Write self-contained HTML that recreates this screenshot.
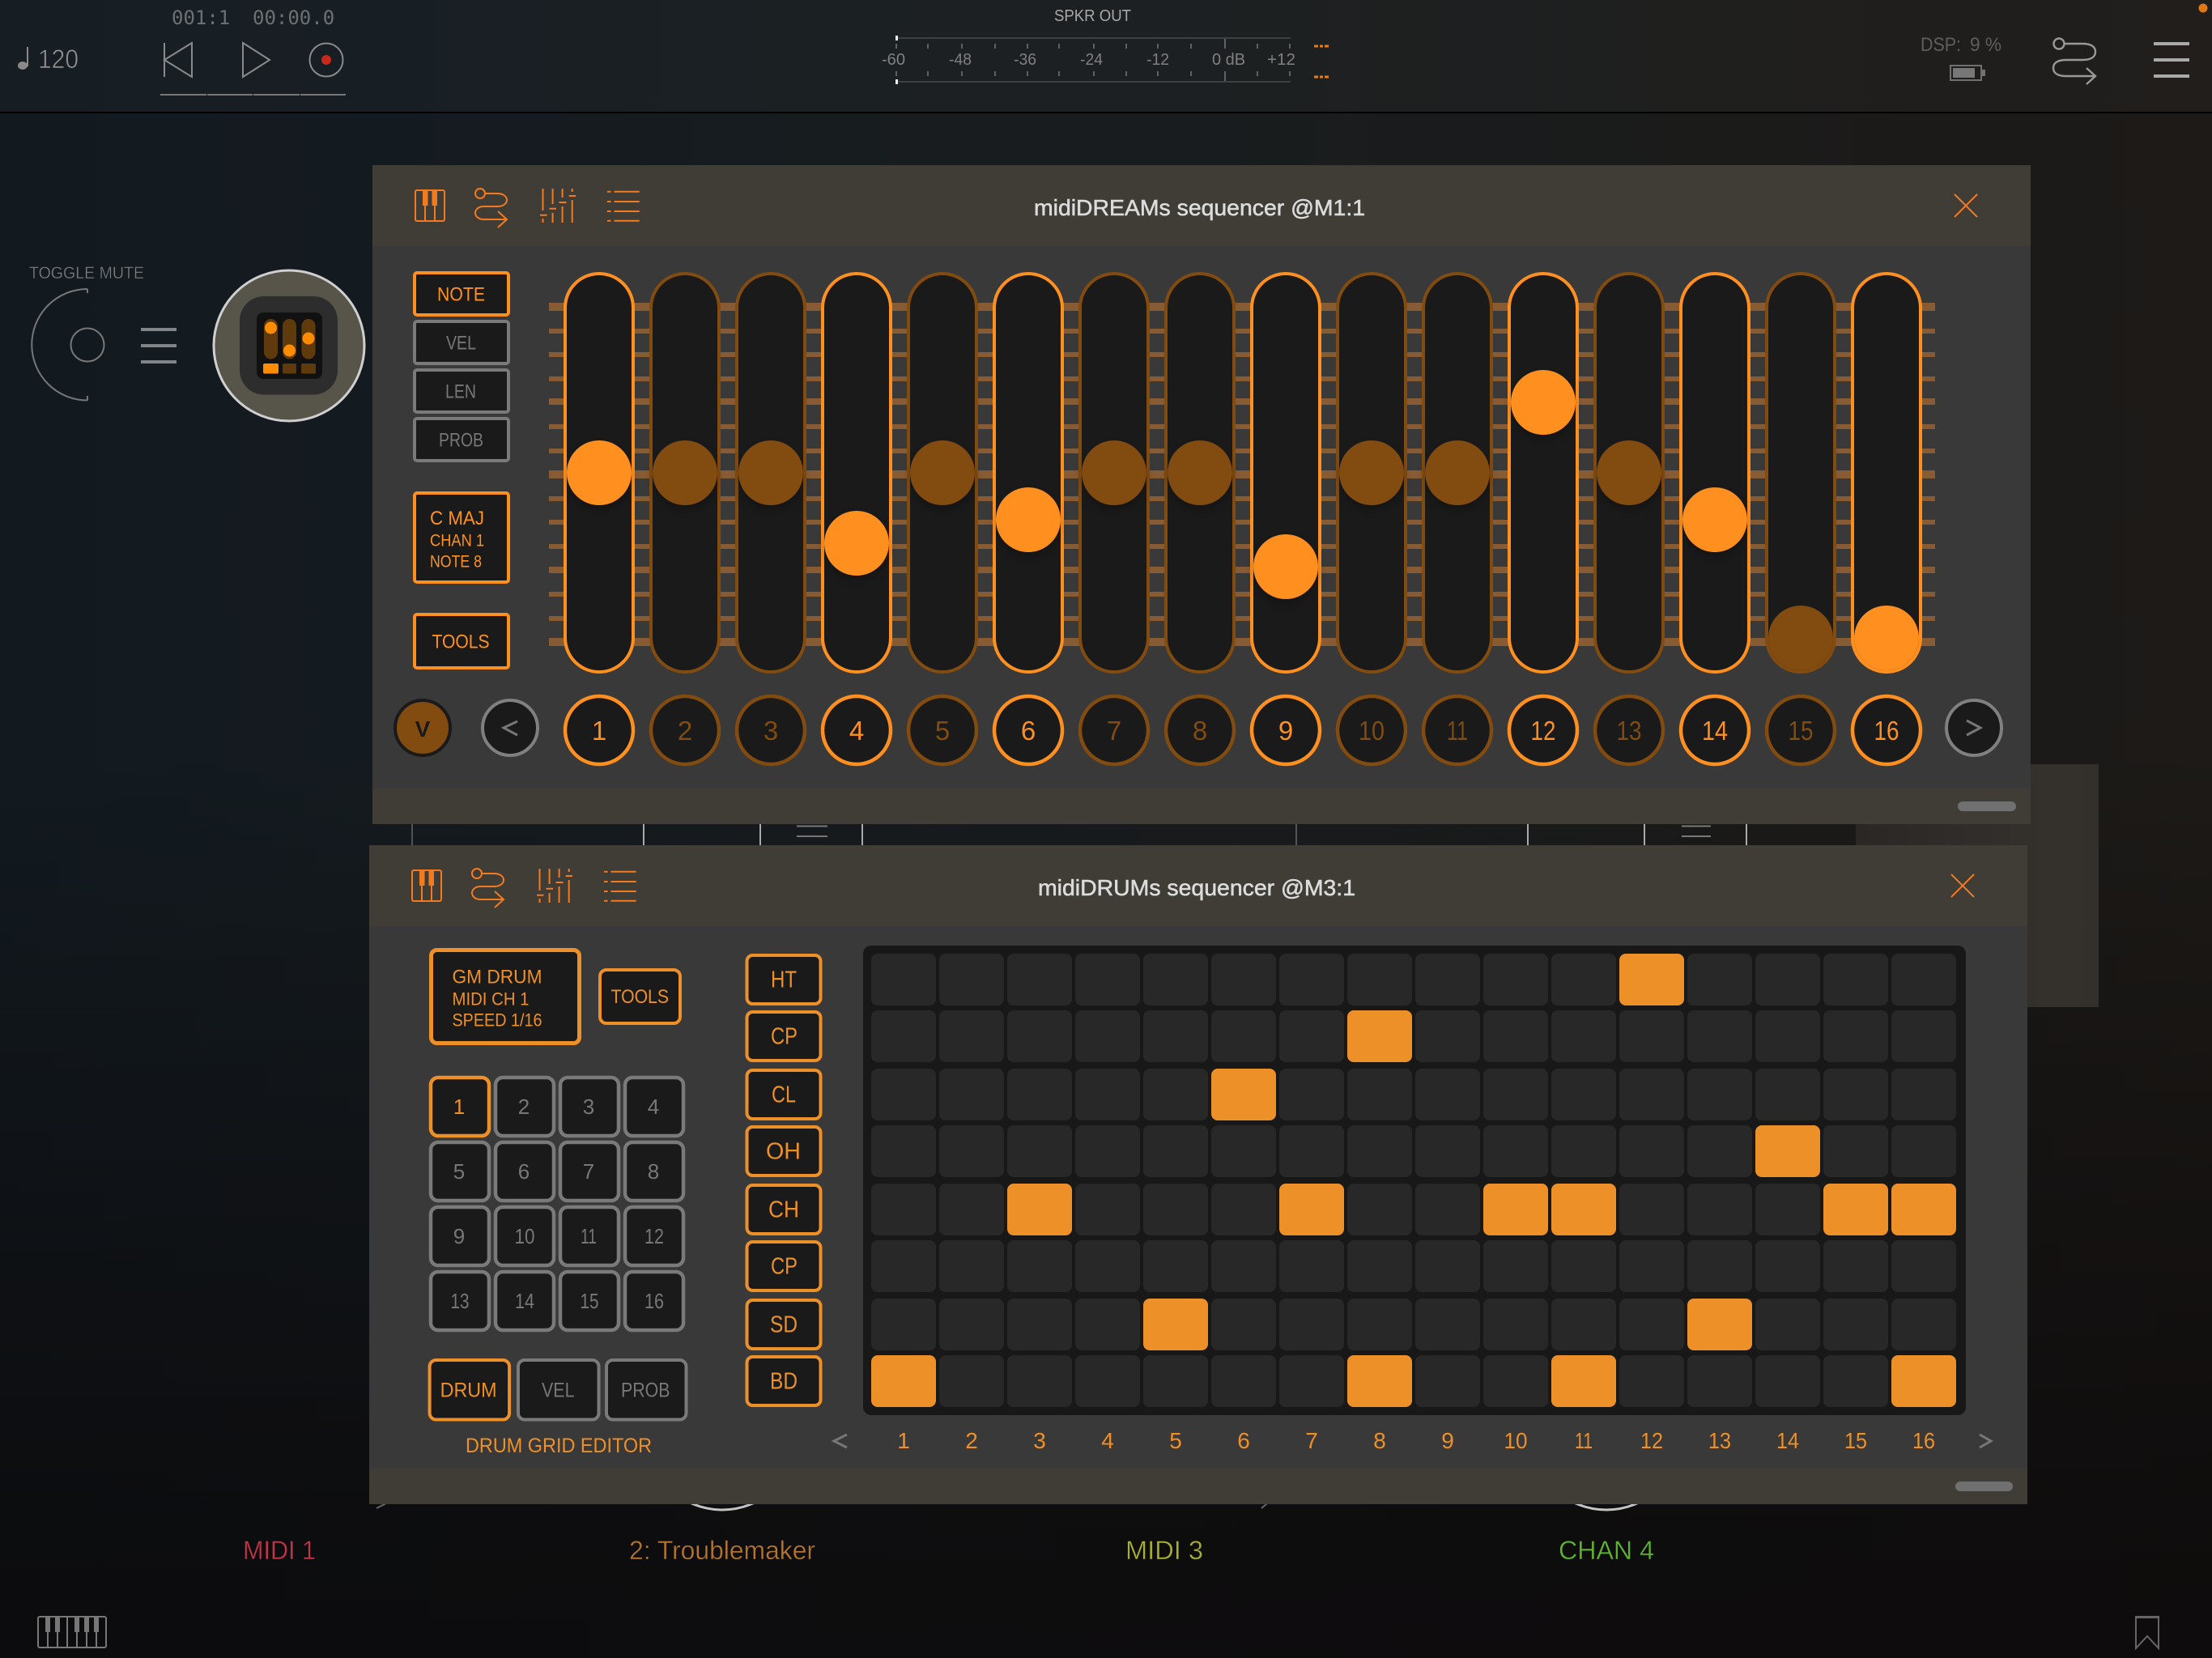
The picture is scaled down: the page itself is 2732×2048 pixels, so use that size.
<!DOCTYPE html>
<html><head><meta charset="utf-8"><title>midiDREAMs</title>
<style>
html,body{margin:0;padding:0;background:#111;width:2732px;height:2048px;overflow:hidden}
svg{display:block;font-family:"Liberation Sans",sans-serif}
.o{fill:#ff9020}.b{fill:#824b10}.g{fill:#777}.o2{fill:#ee9028}
.so{stroke:#ff9020}.sb{stroke:#824b10}.sg{stroke:#7a7a7a}.so2{stroke:#ee9028}
.s{fill:#1a1a1a;stroke-width:4}
.k{filter:drop-shadow(0 6px 5px rgba(0,0,0,.22))}
.t{font-size:24px}
.n{font-size:33px;text-anchor:middle}
.p{font-size:26px;text-anchor:middle;fill:#777}
.l{font-size:29px}
.c{font-size:28px;text-anchor:middle;fill:#ee9028}
.m{font-size:20px;fill:#808080}
.ic{fill:none;stroke:#f47a20;stroke-width:2}
</style></head><body>
<svg width="2732" height="2048" viewBox="0 0 2732 2048" xmlns="http://www.w3.org/2000/svg">
<defs>
<linearGradient id="bg1" x1="0" x2="1" y1="0" y2="0"><stop offset="0" stop-color="#121a20"/><stop offset=".45" stop-color="#181c1f"/><stop offset="1" stop-color="#1d1a17"/></linearGradient>
<linearGradient id="bg2" x1="0" x2="0" y1="0" y2="1"><stop offset="0" stop-color="#0a0808" stop-opacity="0"/><stop offset=".45" stop-color="#0a0808" stop-opacity="0"/><stop offset=".9" stop-color="#0a0809" stop-opacity=".72"/><stop offset="1" stop-color="#0a0809" stop-opacity=".78"/></linearGradient>
<linearGradient id="blk" x1="0" x2="1" y1="0" y2="0"><stop offset="0" stop-color="#2a2725"/><stop offset=".8" stop-color="#34312d"/><stop offset="1" stop-color="#33302c"/></linearGradient>
<g id="hdr">
<rect class="ic" x="509" y="1075" width="36" height="38" rx="2"/>
<rect x="518" y="1075" width="6.5" height="19" fill="#f47a20"/>
<rect x="529.5" y="1075" width="6.5" height="19" fill="#f47a20"/>
<path class="ic" d="M521 1094V1113M533 1094V1113"/>
<ellipse class="ic" cx="589" cy="1079" rx="6" ry="6"/>
<path class="ic" d="M595 1079H610C618 1079 622 1083 622 1087C622 1091 618 1095 610 1095H593C587 1095 583 1099 583 1103C583 1107 587 1111 593 1111H622M611 1101L622 1111L611 1121"/>
<path class="ic" d="M666.5 1073V1100M663 1105.7H671.5M666.5 1110V1115M678.6 1073V1092M674.5 1097.7H683M678.6 1103V1115M690.6 1073V1084M686.5 1090H695.5M690.6 1095V1115M702.7 1073V1077M698.7 1082H707M702.7 1087V1115"/>
<path class="ic" d="M746 1076.7H750.5M754.5 1076.7H785.7M746 1089H750.5M754.5 1089H785.7M746 1101H750.5M754.5 1101H785.7M746 1112.7H750.5M754.5 1112.7H785.7"/>
<path class="ic" d="M2410 1080L2438 1108M2438 1080L2410 1108" stroke-width="2.4"/>
</g>
<g id="row">
<rect x="1076" width="80" height="64" rx="8"/><rect x="1160" width="80" height="64" rx="8"/><rect x="1244" width="80" height="64" rx="8"/><rect x="1328" width="80" height="64" rx="8"/><rect x="1412" width="80" height="64" rx="8"/><rect x="1496" width="80" height="64" rx="8"/><rect x="1580" width="80" height="64" rx="8"/><rect x="1664" width="80" height="64" rx="8"/><rect x="1748" width="80" height="64" rx="8"/><rect x="1832" width="80" height="64" rx="8"/><rect x="1916" width="80" height="64" rx="8"/><rect x="2000" width="80" height="64" rx="8"/><rect x="2084" width="80" height="64" rx="8"/><rect x="2168" width="80" height="64" rx="8"/><rect x="2252" width="80" height="64" rx="8"/><rect x="2336" width="80" height="64" rx="8"/>
</g>
</defs>

<!-- background -->
<rect width="2732" height="2048" fill="url(#bg1)"/>
<rect width="2732" height="2048" fill="url(#bg2)"/>
<rect width="2732" height="138" fill="#fff" opacity=".018"/>
<rect y="138" width="2732" height="2" fill="#000"/>
<circle cx="2721" cy="10" r="5.5" fill="#e07a10"/>

<!-- top bar -->
<rect x="33" y="58" width="2" height="24" fill="#8a8a8a"/><ellipse cx="28" cy="81" rx="6" ry="5" fill="#8a8a8a"/>
<text x="47" y="84" font-size="32" textLength="50" lengthAdjust="spacingAndGlyphs" fill="#8e8e8e" stroke="#161b1f" stroke-width=".6">120</text>
<text x="212" y="30" font-size="24" style="font-family:'DejaVu Sans Mono',monospace" fill="#6d7073">001:1</text>
<text x="312" y="30" font-size="24" style="font-family:'DejaVu Sans Mono',monospace" fill="#6d7073">00:00.0</text>
<path d="M203 53V95M237 53L203 74L237 95Z" fill="none" stroke="#8a8a8a" stroke-width="2"/>
<path d="M300 53L333 74L300 95Z" fill="none" stroke="#8a8a8a" stroke-width="2"/>
<circle cx="403" cy="74" r="20.5" fill="none" stroke="#8a8a8a" stroke-width="2"/>
<ellipse cx="403" cy="74" rx="6" ry="6" fill="#c8291a"/>
<path d="M198 117H255M256 117H312M313 117H370M371 117H427" stroke="#777" stroke-width="2" fill="none"/>

<text x="1302" y="26" font-size="20" textLength="95" lengthAdjust="spacingAndGlyphs" fill="#a8a8a8">SPKR OUT</text>
<rect x="1107" y="46" width="487" height="2" fill="#3d4042"/><rect x="1107" y="100" width="487" height="2" fill="#3d4042"/>
<rect x="1106" y="44" width="3" height="6" fill="#eee"/><rect x="1106" y="98" width="3" height="6" fill="#eee"/>
<path d="M1107 54V60M1146 54V60M1188 54V60M1229 54V60M1269 54V60M1308 54V60M1351 54V60M1391 54V60M1430 54V60M1471 54V60M1513 48V60M1553 54V60M1593 54V60M1107 88V94M1146 88V94M1188 88V94M1229 88V94M1269 88V94M1308 88V94M1351 88V94M1391 88V94M1430 88V94M1471 88V94M1513 88V100M1553 88V94M1593 88V94" stroke="#777" stroke-width="1.5" fill="none"/>
<text class="m" x="1089" y="80" textLength="29" lengthAdjust="spacingAndGlyphs">-60</text>
<text class="m" x="1172" y="80" textLength="28" lengthAdjust="spacingAndGlyphs">-48</text>
<text class="m" x="1252" y="80" textLength="28" lengthAdjust="spacingAndGlyphs">-36</text>
<text class="m" x="1334" y="80" textLength="28" lengthAdjust="spacingAndGlyphs">-24</text>
<text class="m" x="1416" y="80" textLength="28" lengthAdjust="spacingAndGlyphs">-12</text>
<text class="m" x="1497" y="80" textLength="41" lengthAdjust="spacingAndGlyphs">0 dB</text>
<text class="m" x="1565" y="80" textLength="35" lengthAdjust="spacingAndGlyphs">+12</text>
<path d="M1623 57H1628M1630 57H1634M1636 57H1641M1623 95H1628M1630 95H1634M1636 95H1641" stroke="#f07810" stroke-width="3" fill="none"/>

<text x="2372" y="63" font-size="24" textLength="50" lengthAdjust="spacingAndGlyphs" fill="#5e5e5e">DSP:</text>
<text x="2433" y="63" font-size="24" textLength="39" lengthAdjust="spacingAndGlyphs" fill="#5e5e5e">9 %</text>
<rect x="2409" y="81" width="38" height="18" fill="none" stroke="#707070" stroke-width="2"/>
<rect x="2412" y="84" width="27" height="12" fill="#777"/><rect x="2448" y="86" width="4" height="8" fill="#707070"/>
<ellipse cx="2543" cy="54" rx="6.5" ry="6.5" fill="none" stroke="#999" stroke-width="2.4"/>
<path d="M2550 54H2572C2583 54 2588 58 2588 64C2588 70 2583 74 2572 74H2552C2541 74 2536 78 2536 84C2536 90 2541 94 2552 94H2588M2577 84L2588 94L2577 104" fill="none" stroke="#999" stroke-width="2.4"/>
<rect x="2660" y="52" width="44" height="4" fill="#aaa"/><rect x="2660" y="72" width="44" height="4" fill="#aaa"/><rect x="2660" y="92" width="44" height="4" fill="#aaa"/>

<!-- left sidebar -->
<text x="36" y="344" font-size="21" textLength="142" lengthAdjust="spacingAndGlyphs" fill="#7c7f82" stroke="#12191f" stroke-width=".4">TOGGLE MUTE</text>
<path d="M108 357A68.75 68.75 0 0 0 108 494.5M108 357V362M108 494.5V489" fill="none" stroke="#777" stroke-width="2"/>
<circle cx="108" cy="426" r="20.5" fill="none" stroke="#777" stroke-width="2"/>
<rect x="174" y="405" width="44" height="4" fill="#808488"/><rect x="174" y="425" width="44" height="4" fill="#808488"/><rect x="174" y="445" width="44" height="4" fill="#808488"/>
<circle cx="357" cy="427" r="93" fill="#57544a" stroke="#cfcfcf" stroke-width="3"/>
<rect x="296" y="366" width="121" height="121.5" rx="30" fill="#2d2d2d"/>
<rect x="317" y="386" width="81" height="82" rx="8" fill="#111"/>
<rect x="326" y="394" width="17" height="49.5" rx="8.5" fill="#5e3a0c"/><rect x="349" y="394" width="17" height="49.5" rx="8.5" fill="#5e3a0c"/><rect x="372.5" y="394" width="17" height="49.5" rx="8.5" fill="#5e3a0c"/>
<circle cx="334.5" cy="405" r="7.5" fill="#ff8c00"/><circle cx="357.5" cy="433" r="7.5" fill="#ff8c00"/><circle cx="381" cy="418" r="7.5" fill="#ff8c00"/>
<rect x="325" y="449" width="19" height="12.5" rx="2" fill="#ff8c00"/><rect x="349" y="449" width="17" height="12.5" rx="2" fill="#5e3a0c"/><rect x="372" y="449" width="18" height="12.5" rx="2" fill="#5e3a0c"/>

<!-- stuff behind panels -->
<rect x="2292" y="1018" width="300" height="26" fill="url(#blk)"/>
<rect x="2292" y="944" width="300" height="300" fill="url(#blk)"/>
<path d="M509 1018V1044M1601 1018V1044" stroke="#666" stroke-width="1.5"/>
<path d="M795 1018V1044M939 1018V1044M1065 1018V1044M1887 1018V1044M2031 1018V1044M2157 1018V1044" stroke="#aaa" stroke-width="2"/>
<path d="M984 1020.5H1022M984 1033H1022M2077 1020.5H2113M2077 1033H2113" stroke="#777" stroke-width="2"/>
<circle cx="892" cy="1771" r="94" fill="none" stroke="#c4c4c4" stroke-width="3"/>
<circle cx="1984" cy="1771" r="94" fill="none" stroke="#c4c4c4" stroke-width="3"/>
<path d="M465 1863L477 1857M1558 1863L1570 1853" stroke="#666" stroke-width="2"/>

<!-- PANEL 1 -->
<rect x="460" y="204" width="2048" height="814" fill="#393939"/>
<rect x="460" y="204" width="2048" height="100" fill="#403d37"/>
<rect x="460" y="974" width="2048" height="44" fill="#403d37"/>
<use href="#hdr" transform="translate(4,-840)"/>
<text x="1277" y="266" font-size="28" textLength="409" lengthAdjust="spacingAndGlyphs" fill="#dcdcdc" stroke="#dcdcdc" stroke-width=".55">midiDREAMs sequencer @M1:1</text>
<rect x="2418" y="990" width="72" height="12" rx="6" fill="#707070"/>

<rect class="s so" x="512" y="337" width="116" height="52" rx="3"/>
<rect class="s sg" x="512" y="397" width="116" height="52" rx="3"/>
<rect class="s sg" x="512" y="457" width="116" height="52" rx="3"/>
<rect class="s sg" x="512" y="517" width="116" height="52" rx="3"/>
<rect class="s so" x="512" y="609" width="116" height="110" rx="3"/>
<rect class="s so" x="512" y="759" width="116" height="66" rx="3"/>
<text class="t o" x="540" y="371.5" textLength="59" lengthAdjust="spacingAndGlyphs">NOTE</text>
<text class="t g" x="551" y="431.5" textLength="37" lengthAdjust="spacingAndGlyphs">VEL</text>
<text class="t g" x="550" y="491.5" textLength="38" lengthAdjust="spacingAndGlyphs">LEN</text>
<text class="t g" x="542" y="551.5" textLength="55" lengthAdjust="spacingAndGlyphs">PROB</text>
<text class="t o" x="531" y="648" textLength="67" lengthAdjust="spacingAndGlyphs">C MAJ</text>
<text class="o" x="531" y="674.5" font-size="21" textLength="67" lengthAdjust="spacingAndGlyphs">CHAN 1</text>
<text class="o" x="531" y="700.5" font-size="21" textLength="64" lengthAdjust="spacingAndGlyphs">NOTE 8</text>
<text class="t o" x="533.5" y="800.5" textLength="71" lengthAdjust="spacingAndGlyphs">TOOLS</text>

<!-- rungs -->
<g fill="#875b33">
<rect x="678" y="374" width="1712" height="10"/><rect x="678" y="406" width="1712" height="6"/><rect x="678" y="435" width="1712" height="6"/><rect x="678" y="465" width="1712" height="6"/><rect x="678" y="492" width="1712" height="8"/><rect x="678" y="524" width="1712" height="6"/><rect x="678" y="554" width="1712" height="6"/><rect x="678" y="581" width="1712" height="10"/><rect x="678" y="613" width="1712" height="6"/><rect x="678" y="642" width="1712" height="6"/><rect x="678" y="672" width="1712" height="6"/><rect x="678" y="700" width="1712" height="8"/><rect x="678" y="731" width="1712" height="6"/><rect x="678" y="761" width="1712" height="6"/><rect x="678" y="788" width="1712" height="10"/>
</g>
<!-- sliders -->
<rect class="s so" x="698" y="338" width="84" height="492" rx="42"/><circle class="o k" cx="740" cy="584" r="40"/>
<rect class="s sb" x="804" y="338" width="84" height="492" rx="42"/><circle class="b k" cx="846" cy="584" r="40"/>
<rect class="s sb" x="910" y="338" width="84" height="492" rx="42"/><circle class="b k" cx="952" cy="584" r="40"/>
<rect class="s so" x="1016" y="338" width="84" height="492" rx="42"/><circle class="o k" cx="1058" cy="671" r="40"/>
<rect class="s sb" x="1122" y="338" width="84" height="492" rx="42"/><circle class="b k" cx="1164" cy="584" r="40"/>
<rect class="s so" x="1228" y="338" width="84" height="492" rx="42"/><circle class="o k" cx="1270" cy="642" r="40"/>
<rect class="s sb" x="1334" y="338" width="84" height="492" rx="42"/><circle class="b k" cx="1376" cy="584" r="40"/>
<rect class="s sb" x="1440" y="338" width="84" height="492" rx="42"/><circle class="b k" cx="1482" cy="584" r="40"/>
<rect class="s so" x="1546" y="338" width="84" height="492" rx="42"/><circle class="o k" cx="1588" cy="700" r="40"/>
<rect class="s sb" x="1652" y="338" width="84" height="492" rx="42"/><circle class="b k" cx="1694" cy="584" r="40"/>
<rect class="s sb" x="1758" y="338" width="84" height="492" rx="42"/><circle class="b k" cx="1800" cy="584" r="40"/>
<rect class="s so" x="1864" y="338" width="84" height="492" rx="42"/><circle class="o k" cx="1906" cy="497" r="40"/>
<rect class="s sb" x="1970" y="338" width="84" height="492" rx="42"/><circle class="b k" cx="2012" cy="584" r="40"/>
<rect class="s so" x="2076" y="338" width="84" height="492" rx="42"/><circle class="o k" cx="2118" cy="642" r="40"/>
<rect class="s sb" x="2182" y="338" width="84" height="492" rx="42"/><circle class="b" cx="2224" cy="788" r="40"/>
<rect class="s so" x="2288" y="338" width="84" height="492" rx="42"/><circle class="o" cx="2330" cy="788" r="40"/>

<!-- step buttons -->
<circle cx="522" cy="899" r="34" fill="#824b10" stroke="#1a1a1a" stroke-width="4"/>
<text x="522" y="910" font-size="28" font-weight="bold" text-anchor="middle" fill="#1a1a1a">V</text>
<circle cx="630" cy="899" r="34" fill="#1a1a1a" stroke="#808080" stroke-width="4"/>
<path d="M639 891L622 899L639 908" fill="none" stroke="#777" stroke-width="3"/>
<circle cx="2438" cy="899" r="34" fill="#1a1a1a" stroke="#808080" stroke-width="4"/>
<path d="M2429 890L2446 899L2429 908" fill="none" stroke="#777" stroke-width="3"/>
<g fill="#1a1a1a" stroke-width="4.5">
<circle class="so" cx="740" cy="902" r="42"/><circle class="sb" cx="846" cy="902" r="42"/><circle class="sb" cx="952" cy="902" r="42"/><circle class="so" cx="1058" cy="902" r="42"/><circle class="sb" cx="1164" cy="902" r="42"/><circle class="so" cx="1270" cy="902" r="42"/><circle class="sb" cx="1376" cy="902" r="42"/><circle class="sb" cx="1482" cy="902" r="42"/><circle class="so" cx="1588" cy="902" r="42"/><circle class="sb" cx="1694" cy="902" r="42"/><circle class="sb" cx="1800" cy="902" r="42"/><circle class="so" cx="1906" cy="902" r="42"/><circle class="sb" cx="2012" cy="902" r="42"/><circle class="so" cx="2118" cy="902" r="42"/><circle class="sb" cx="2224" cy="902" r="42"/><circle class="so" cx="2330" cy="902" r="42"/>
</g>
<text class="n o" x="740" y="914">1</text>
<text class="n b" x="846" y="914">2</text>
<text class="n b" x="952" y="914">3</text>
<text class="n o" x="1058" y="914">4</text>
<text class="n b" x="1164" y="914">5</text>
<text class="n o" x="1270" y="914">6</text>
<text class="n b" x="1376" y="914">7</text>
<text class="n b" x="1482" y="914">8</text>
<text class="n o" x="1588" y="914">9</text>
<text class="n b" x="1694" y="914" textLength="32" lengthAdjust="spacingAndGlyphs">10</text>
<text class="n b" x="1800" y="914" textLength="26" lengthAdjust="spacingAndGlyphs">11</text>
<text class="n o" x="1906" y="914" textLength="31" lengthAdjust="spacingAndGlyphs">12</text>
<text class="n b" x="2012" y="914" textLength="31" lengthAdjust="spacingAndGlyphs">13</text>
<text class="n o" x="2118" y="914" textLength="32" lengthAdjust="spacingAndGlyphs">14</text>
<text class="n b" x="2224" y="914" textLength="31" lengthAdjust="spacingAndGlyphs">15</text>
<text class="n o" x="2330" y="914" textLength="31" lengthAdjust="spacingAndGlyphs">16</text>

<!-- PANEL 2 -->
<rect x="456" y="1044" width="2048" height="814" fill="#393939"/>
<rect x="456" y="1044" width="2048" height="100" fill="#403d37"/>
<rect x="456" y="1814" width="2048" height="44" fill="#403d37"/>
<use href="#hdr"/>
<text x="1282" y="1106" font-size="28" textLength="392" lengthAdjust="spacingAndGlyphs" fill="#dcdcdc" stroke="#dcdcdc" stroke-width=".55">midiDRUMs sequencer @M3:1</text>
<rect x="2415" y="1830" width="71" height="12" rx="6" fill="#707070"/>

<rect class="so2" x="532.5" y="1173.5" width="183" height="115" rx="7" fill="#1a1a1a" stroke-width="5"/>
<text class="o2" x="558.5" y="1214.5" font-size="24" textLength="111" lengthAdjust="spacingAndGlyphs">GM DRUM</text>
<text class="o2" x="558.5" y="1241.5" font-size="22" textLength="95" lengthAdjust="spacingAndGlyphs">MIDI CH 1</text>
<text class="o2" x="558.5" y="1267.5" font-size="22" textLength="111" lengthAdjust="spacingAndGlyphs">SPEED 1/16</text>
<rect class="so2" x="741" y="1198" width="99" height="66" rx="8" fill="#1a1a1a" stroke-width="4"/>
<text class="o2" x="754.5" y="1239" font-size="24" textLength="71.5" lengthAdjust="spacingAndGlyphs">TOOLS</text>

<g fill="#1a1a1a" stroke-width="4.5">
<rect class="so2" x="532" y="1331" width="72" height="72" rx="9"/>
<rect class="sg" x="612" y="1331" width="72" height="72" rx="9"/><rect class="sg" x="692" y="1331" width="72" height="72" rx="9"/><rect class="sg" x="772" y="1331" width="72" height="72" rx="9"/>
<rect class="sg" x="532" y="1411" width="72" height="72" rx="9"/><rect class="sg" x="612" y="1411" width="72" height="72" rx="9"/><rect class="sg" x="692" y="1411" width="72" height="72" rx="9"/><rect class="sg" x="772" y="1411" width="72" height="72" rx="9"/>
<rect class="sg" x="532" y="1491" width="72" height="72" rx="9"/><rect class="sg" x="612" y="1491" width="72" height="72" rx="9"/><rect class="sg" x="692" y="1491" width="72" height="72" rx="9"/><rect class="sg" x="772" y="1491" width="72" height="72" rx="9"/>
<rect class="sg" x="532" y="1571" width="72" height="72" rx="9"/><rect class="sg" x="612" y="1571" width="72" height="72" rx="9"/><rect class="sg" x="692" y="1571" width="72" height="72" rx="9"/><rect class="sg" x="772" y="1571" width="72" height="72" rx="9"/>
</g>
<text class="p" x="567" y="1376" style="fill:#ee9028">1</text><text class="p" x="647" y="1376">2</text><text class="p" x="727" y="1376">3</text><text class="p" x="807" y="1376">4</text>
<text class="p" x="567" y="1456">5</text><text class="p" x="647" y="1456">6</text><text class="p" x="727" y="1456">7</text><text class="p" x="807" y="1456">8</text>
<text class="p" x="567" y="1536">9</text><text class="p" x="648" y="1536" textLength="25" lengthAdjust="spacingAndGlyphs">10</text><text class="p" x="727" y="1536" textLength="20" lengthAdjust="spacingAndGlyphs">11</text><text class="p" x="808" y="1536" textLength="24" lengthAdjust="spacingAndGlyphs">12</text>
<text class="p" x="568" y="1616" textLength="23" lengthAdjust="spacingAndGlyphs">13</text><text class="p" x="648" y="1616" textLength="24" lengthAdjust="spacingAndGlyphs">14</text><text class="p" x="728" y="1616" textLength="23" lengthAdjust="spacingAndGlyphs">15</text><text class="p" x="808" y="1616" textLength="24" lengthAdjust="spacingAndGlyphs">16</text>

<g fill="#1a1a1a" stroke-width="4">
<rect class="so2" x="530.6" y="1680" width="98.5" height="73.5" rx="8"/>
<rect class="sg" x="640" y="1680" width="99.5" height="73.5" rx="8"/>
<rect class="sg" x="749" y="1680" width="98.5" height="73.5" rx="8"/>
</g>
<text class="o2" x="543.6" y="1725.5" font-size="25" textLength="70" lengthAdjust="spacingAndGlyphs">DRUM</text>
<text class="g" x="669" y="1725.5" font-size="25" textLength="40.5" lengthAdjust="spacingAndGlyphs">VEL</text>
<text class="g" x="767" y="1725.5" font-size="25" textLength="60.5" lengthAdjust="spacingAndGlyphs">PROB</text>
<text class="o2" x="575" y="1794" font-size="25" textLength="230" lengthAdjust="spacingAndGlyphs">DRUM GRID EDITOR</text>

<g fill="#1a1a1a" stroke-width="4">
<rect class="so2" x="922.5" y="1180" width="91" height="60" rx="7"/>
<rect class="so2" x="922.5" y="1250" width="91" height="60" rx="7"/>
<rect class="so2" x="922.5" y="1322" width="91" height="60" rx="7"/>
<rect class="so2" x="922.5" y="1392" width="91" height="60" rx="7"/>
<rect class="so2" x="922.5" y="1464" width="91" height="60" rx="7"/>
<rect class="so2" x="922.5" y="1534" width="91" height="60" rx="7"/>
<rect class="so2" x="922.5" y="1606" width="91" height="60" rx="7"/>
<rect class="so2" x="922.5" y="1676" width="91" height="60" rx="7"/>
</g>
<text class="l o2" x="952" y="1219.5" textLength="32" lengthAdjust="spacingAndGlyphs">HT</text>
<text class="l o2" x="952" y="1289.5" textLength="33" lengthAdjust="spacingAndGlyphs">CP</text>
<text class="l o2" x="953" y="1361.5" textLength="30" lengthAdjust="spacingAndGlyphs">CL</text>
<text class="l o2" x="946" y="1431.5" textLength="43" lengthAdjust="spacingAndGlyphs">OH</text>
<text class="l o2" x="949" y="1503.5" textLength="38" lengthAdjust="spacingAndGlyphs">CH</text>
<text class="l o2" x="952" y="1573.5" textLength="33" lengthAdjust="spacingAndGlyphs">CP</text>
<text class="l o2" x="951" y="1645.5" textLength="34" lengthAdjust="spacingAndGlyphs">SD</text>
<text class="l o2" x="951" y="1715.5" textLength="34" lengthAdjust="spacingAndGlyphs">BD</text>

<!-- grid -->
<rect x="1066" y="1168" width="1362" height="580" rx="10" fill="#181818"/>
<g fill="#282828">
<use href="#row" y="1178"/><use href="#row" y="1248"/><use href="#row" y="1320"/><use href="#row" y="1390"/><use href="#row" y="1462"/><use href="#row" y="1532"/><use href="#row" y="1604"/><use href="#row" y="1674"/>
</g>
<g fill="#ee9028">
<rect x="2000" y="1178" width="80" height="64" rx="8"/>
<rect x="1664" y="1248" width="80" height="64" rx="8"/>
<rect x="1496" y="1320" width="80" height="64" rx="8"/>
<rect x="2168" y="1390" width="80" height="64" rx="8"/>
<rect x="1244" y="1462" width="80" height="64" rx="8"/><rect x="1580" y="1462" width="80" height="64" rx="8"/><rect x="1832" y="1462" width="80" height="64" rx="8"/><rect x="1916" y="1462" width="80" height="64" rx="8"/><rect x="2252" y="1462" width="80" height="64" rx="8"/><rect x="2336" y="1462" width="80" height="64" rx="8"/>
<rect x="1412" y="1604" width="80" height="64" rx="8"/><rect x="2084" y="1604" width="80" height="64" rx="8"/>
<rect x="1076" y="1674" width="80" height="64" rx="8"/><rect x="1664" y="1674" width="80" height="64" rx="8"/><rect x="1916" y="1674" width="80" height="64" rx="8"/><rect x="2336" y="1674" width="80" height="64" rx="8"/>
</g>
<path d="M1046 1772L1030 1780L1046 1788M2445 1772L2459 1780L2445 1788" fill="none" stroke="#777" stroke-width="3"/>
<text class="c" x="1116" y="1789">1</text><text class="c" x="1200" y="1789">2</text><text class="c" x="1284" y="1789">3</text><text class="c" x="1368" y="1789">4</text><text class="c" x="1452" y="1789">5</text><text class="c" x="1536" y="1789">6</text><text class="c" x="1620" y="1789">7</text><text class="c" x="1704" y="1789">8</text><text class="c" x="1788" y="1789">9</text>
<text class="c" x="1872" y="1789" textLength="29" lengthAdjust="spacingAndGlyphs">10</text><text class="c" x="1956" y="1789" textLength="22" lengthAdjust="spacingAndGlyphs">11</text><text class="c" x="2040" y="1789" textLength="28" lengthAdjust="spacingAndGlyphs">12</text><text class="c" x="2124" y="1789" textLength="28" lengthAdjust="spacingAndGlyphs">13</text><text class="c" x="2208" y="1789" textLength="28" lengthAdjust="spacingAndGlyphs">14</text><text class="c" x="2292" y="1789" textLength="28" lengthAdjust="spacingAndGlyphs">15</text><text class="c" x="2376" y="1789" textLength="28" lengthAdjust="spacingAndGlyphs">16</text>

<!-- bottom labels -->
<text x="300" y="1926" font-size="32" textLength="90" lengthAdjust="spacingAndGlyphs" fill="#c43448" stroke="#0e0e10" stroke-width=".4">MIDI 1</text>
<text x="777" y="1926" font-size="32" textLength="230" lengthAdjust="spacingAndGlyphs" fill="#b5742c" stroke="#100f0f" stroke-width=".4">2: Troublemaker</text>
<text x="1390" y="1926" font-size="32" textLength="96" lengthAdjust="spacingAndGlyphs" fill="#a8b030" stroke="#100f0f" stroke-width=".4">MIDI 3</text>
<text x="1925" y="1926" font-size="32" textLength="118" lengthAdjust="spacingAndGlyphs" fill="#5db52f" stroke="#100f0f" stroke-width=".4">CHAN 4</text>

<!-- piano -->
<rect x="47" y="1997" width="84" height="38" rx="2" fill="none" stroke="#777" stroke-width="2"/>
<path d="M59 2015V2035M71 2015V2035M83 1997V2035M95 2015V2035M107 2015V2035M119 2015V2035" stroke="#777" stroke-width="2" fill="none"/>
<path d="M56 1997h6v19h-6zM68 1997h6v19h-6zM92 1997h6v19h-6zM104 1997h6v19h-6zM116 1997h6v19h-6z" fill="#777"/>
<!-- bookmark -->
<path d="M2638 2036V1997H2666V2036L2652 2021Z" fill="none" stroke="#666" stroke-width="2"/>
<rect x="2637" y="1996" width="30" height="3" fill="#666"/>
</svg>
</body></html>
